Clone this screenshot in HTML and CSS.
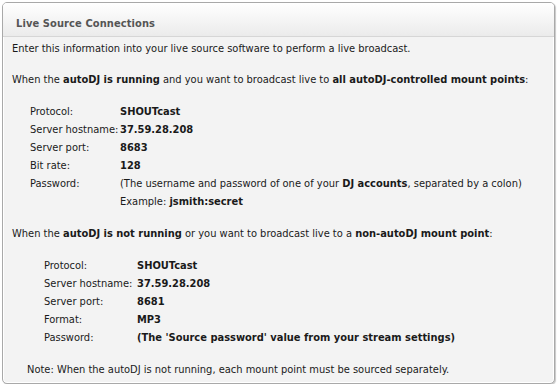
FILE: index.html
```html
<!DOCTYPE html>
<html>
<head>
<meta charset="utf-8">
<link rel="stylesheet" href="styles.css">
</head>
<body>
<div class="panel">
  <div class="panel-head">Live Source Connections</div>
  <div class="panel-body">
    <p class="intro">Enter this information into your live source software to perform a live broadcast.</p>
    <p class="lead">When the <b>autoDJ is running</b> and you want to broadcast live to <b>all autoDJ-controlled mount points</b>:</p>
    <div class="info info-a">
      <span class="k">Protocol:</span><span class="v"><b>SHOUTcast</b></span>
      <span class="k">Server hostname:</span><span class="v"><b>37.59.28.208</b></span>
      <span class="k">Server port:</span><span class="v"><b>8683</b></span>
      <span class="k">Bit rate:</span><span class="v"><b>128</b></span>
      <span class="k">Password:</span><span class="v">(The username and password of one of your <b>DJ accounts</b>, separated by a colon)</span>
      <span class="k"></span><span class="v">Example: <b>jsmith:secret</b></span>
    </div>
    <p class="lead">When the <b>autoDJ is not running</b> or you want to broadcast live to a <b>non-autoDJ mount point</b>:</p>
    <div class="info info-b">
      <span class="k">Protocol:</span><span class="v"><b>SHOUTcast</b></span>
      <span class="k">Server hostname:</span><span class="v"><b>37.59.28.208</b></span>
      <span class="k">Server port:</span><span class="v"><b>8681</b></span>
      <span class="k">Format:</span><span class="v"><b>MP3</b></span>
      <span class="k">Password:</span><span class="v"><b>(The 'Source password' value from your stream settings)</b></span>
    </div>
    <p class="note">Note: When the autoDJ is not running, each mount point must be sourced separately.</p>
  </div>
</div>
</body>
</html>
```
FILE: styles.css
```css
html, body { margin: 0; padding: 0; background: #fff; }
body {
  padding: 2px 4px 0 2px;
  font-family: "DejaVu Sans Condensed", "DejaVu Sans", sans-serif;
  font-size: 11px;
  color: #1a1a1a;
}
.panel {
  width: 553px;
  height: 382px;
  box-sizing: border-box;
  border: 1px solid #a9a9a9;
  border-radius: 5px;
  background: #f3f3f3;
  box-shadow: 1px 1px 1px #c8c8c8, inset 0 0 0 1px #fff;
  overflow: hidden;
}
.panel-head {
  height: 34px;
  box-sizing: border-box;
  padding: 14px 0 0 13px;
  font-weight: bold;
  font-size: 11px;
  letter-spacing: 0.1px;
  color: #555;
  background: linear-gradient(#ffffff, #ebebeb);
  border-bottom: 1px solid #d6d6d6;
}
.panel-body { padding: 3px 0 0 9px; }
p { margin: 0; line-height: 18px; }
.intro { margin-bottom: 13px; }
.lead { margin-bottom: 13px; }
.info {
  display: grid;
  grid-template-columns: 90px auto;
  grid-auto-rows: 18px;
  align-items: center;
  margin-bottom: 15px;
}
.info-a { padding-left: 18px; }
.info-b { padding-left: 32px; grid-template-columns: 93px auto; margin-bottom: 15px; }
.note { padding-left: 15px; }
```
